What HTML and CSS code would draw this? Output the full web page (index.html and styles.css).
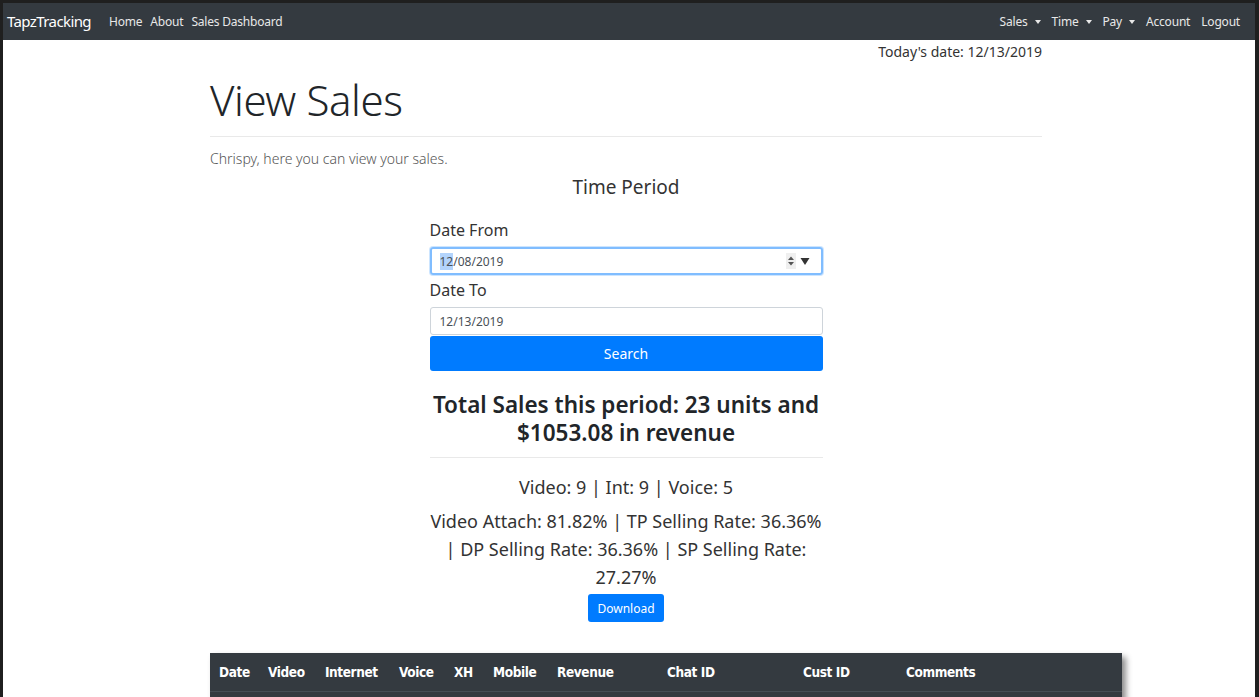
FILE: index.html
```html
<!DOCTYPE html>
<html>
<head>
<meta charset="utf-8">
<link rel="stylesheet" href="styles.css">
</head>
<body>
<div class="frame">
  <nav class="navbar">
    <div class="nav-left">
      <span class="brand">TapzTracking</span>
      <a class="nav-link">Home</a>
      <a class="nav-link">About</a>
      <a class="nav-link">Sales Dashboard</a>
    </div>
    <div class="nav-right">
      <a class="nav-link dd">Sales</a>
      <a class="nav-link dd">Time</a>
      <a class="nav-link dd">Pay</a>
      <a class="nav-link">Account</a>
      <a class="nav-link">Logout</a>
    </div>
  </nav>
  <div class="container">
    <div class="today">Today's date: 12/13/2019</div>
    <h1 class="title">View Sales</h1>
    <hr class="rule">
    <p class="lead">Chrispy, here you can view your sales.</p>
    <h4 class="period">Time Period</h4>
    <div class="form">
      <label class="label">Date From</label>
      <div class="input focus">
        <span class="val"><span class="sel">12</span>/08/2019</span>
        <span class="ctrls">
          <svg class="spin" width="10" height="16" viewBox="0 0 10 16"><rect width="10" height="16" fill="#efefef"/><path d="M2 7 L5 3.5 L8 7 Z M2 9 L5 12.5 L8 9 Z" fill="#555"/></svg>
          <svg class="drop" width="10" height="10" viewBox="0 0 10 10"><path d="M0.5 2 L9.5 2 L5 9 Z" fill="#333"/></svg>
        </span>
      </div>
      <label class="label">Date To</label>
      <div class="input"><span class="val">12/13/2019</span></div>
      <button class="btn-search">Search</button>
      <h3 class="total">Total Sales this period: 23 units and $1053.08 in revenue</h3>
      <hr class="rule small">
      <p class="stat">Video: 9 | Int: 9 | Voice: 5</p>
      <p class="stat">Video Attach: 81.82% | TP Selling Rate: 36.36% | DP Selling Rate: 36.36% | SP Selling Rate: 27.27%</p>
      <div class="dl-wrap"><button class="btn-dl">Download</button></div>
    </div>
    <table class="table">
      <thead>
        <tr>
          <th class="c-date">Date</th>
          <th class="c-video">Video</th>
          <th class="c-int">Internet</th>
          <th class="c-voice">Voice</th>
          <th class="c-xh">XH</th>
          <th class="c-mob">Mobile</th>
          <th class="c-rev">Revenue</th>
          <th class="c-chat">Chat ID</th>
          <th class="c-cust">Cust ID</th>
          <th class="c-com">Comments</th>
        </tr>
      </thead>
      <tbody>
        <tr><td colspan="10"></td></tr>
      </tbody>
    </table>
  </div>
</div>
</body>
</html>
```
FILE: styles.css
```css
html, body {
  margin: 0;
  padding: 0;
  height: 100%;
  overflow: hidden;
}
body {
  background: #1f1f1f;
  font-family: "Noto Sans", "Open Sans", sans-serif;
  color: #212529;
}
.frame {
  margin: 3px 4px 0 3px;
  background: #fff;
  height: 694px;
  overflow: hidden;
}
.navbar {
  height: 37px;
  background: #343a40;
  display: flex;
  align-items: center;
  justify-content: space-between;
  padding: 0 0 1px 4px;
  box-sizing: border-box;
}
.nav-left, .nav-right {
  display: flex;
  align-items: center;
}
.nav-right {
  padding-right: 15px;
}
.brand {
  color: #fff;
  font-size: 15px;
  margin-right: 18px;
  letter-spacing: -0.6px;
}
.nav-link {
  color: #e8e8e8;
  font-size: 12px;
  margin-right: 8px;
  letter-spacing: -0.2px;
}
.nav-right .nav-link {
  margin-right: 0;
  margin-left: 11px;
}
.nav-right .nav-link:first-child {
  margin-left: 0;
}
.nav-link.dd::after {
  content: "";
  display: inline-block;
  margin-left: 7px;
  vertical-align: 2px;
  border-top: 4px solid #e8e8e8;
  border-left: 3.5px solid transparent;
  border-right: 3.5px solid transparent;
}
.container {
  width: 832px;
  margin: 0 0 0 207px;
}
.today {
  text-align: right;
  font-size: 14px;
  color: #333;
  height: 24px;
  line-height: 24px;
}
.title {
  font-size: 42px;
  font-weight: 300;
  margin: 12px 0 0 0;
  line-height: 48px;
  letter-spacing: -0.4px;
}
.rule {
  border: 0;
  border-top: 1px solid #e9e9e9;
  margin: 12px 0 0 0;
}
.lead {
  font-size: 14px;
  font-weight: 300;
  color: #555;
  margin: 13px 0 0 0;
  line-height: 18px;
}
.period {
  text-align: center;
  font-size: 19px;
  font-weight: 400;
  color: #333;
  margin: 6px 0 0 0;
  line-height: 26px;
}
.form {
  width: 393px;
  margin: 0 auto;
  margin-top: 19px;
}
.label {
  display: block;
  font-size: 16px;
  color: #333;
  line-height: 22px;
  margin-top: 4px;
}
.label:first-child {
  margin-top: 0;
}
.input {
  height: 28px;
  border: 1px solid #ced4da;
  border-radius: 3px;
  margin-top: 6px;
  display: flex;
  align-items: center;
  justify-content: space-between;
  padding: 0 12px 0 9px;
  box-sizing: border-box;
  font-size: 12px;
  color: #495057;
}
.input.focus {
  border: 2px solid #80bdff;
  box-shadow: 0 0 0 1px rgba(0,123,255,.2);
  padding-left: 8px;
  padding-right: 11px;
}
.sel {
  background: #b3d4fc;
}
.ctrls {
  display: flex;
  align-items: center;
  gap: 4px;
}
.btn-search {
  display: block;
  width: 100%;
  height: 35px;
  margin-top: 1px;
  background: #007bff;
  border: 0;
  border-radius: 3px;
  color: #fff;
  font-family: inherit;
  font-size: 14px;
}
.total {
  text-align: center;
  font-size: 22.5px;
  font-weight: 600;
  color: #212529;
  line-height: 28px;
  margin: 20px 0 0 0;
}
.rule.small {
  margin-top: 10px;
}
.stat {
  text-align: center;
  font-size: 18px;
  color: #333;
  line-height: 28px;
  margin: 15px 0 0 0;
}
.stat + .stat {
  margin-top: 6px;
}
.dl-wrap {
  text-align: center;
  margin-top: 3px;
}
.btn-dl {
  background: #007bff;
  color: #fff;
  border: 0;
  border-radius: 3px;
  font-family: inherit;
  font-size: 12px;
  height: 28px;
  padding: 0 9px;
}
.table {
  width: 912px;
  margin: 31px 0 0 0;
  border-collapse: collapse;
  background: #343a40;
  box-shadow: 4px 4px 6px rgba(0,0,0,.45);
}
.table th {
  color: #fff;
  font-family: "DejaVu Sans Condensed", "Liberation Sans Narrow", sans-serif;
  font-weight: bold;
  font-size: 13.5px;
  text-align: left;
  height: 38px;
  padding: 0 0 0 9px;
  letter-spacing: -0.4px;
  border-bottom: 1px solid #454d55;
}
.table td {
  height: 20px;
}
.c-date { width: 40px; }
.c-video { width: 48px; }
.c-int { width: 65px; }
.c-voice { width: 46px; }
.c-xh { width: 30px; }
.c-mob { width: 55px; }
.c-rev { width: 101px; }
.c-chat { width: 127px; }
.c-cust { width: 94px; }
```
